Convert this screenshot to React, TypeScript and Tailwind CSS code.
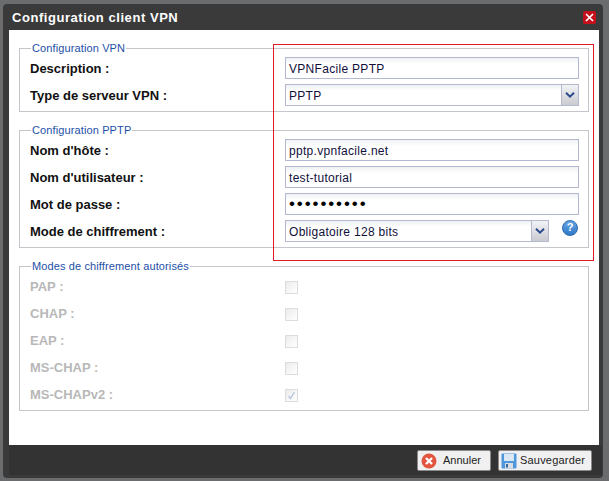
import React from "react";

const font = "font-['Liberation_Sans',sans-serif]";

function Label({ children, disabled }: { children: React.ReactNode; disabled?: boolean }) {
  return (
    <span className={`w-[255px] shrink-0 text-[13px] font-bold ${disabled ? "mb-[2px] text-[#b8b8b8]" : "mt-[1px] text-[#111]"}`}>
      {children}
    </span>
  );
}

function Input({ value, password }: { value: string; password?: boolean }) {
  return (
    <div className={`flex h-[22px] w-[294px] items-center border border-[#b4b9cf] bg-gradient-to-b from-[#eef0f3] to-white to-[30%] pl-[3px] ${password ? "text-[17px] tracking-[1.9px] text-black" : "pt-[1px] text-[12px] tracking-[0.3px] text-[#10103a]"}`}>
      {value}
    </div>
  );
}

function Select({ value, width }: { value: string; width: string }) {
  return (
    <div className={`flex h-[22px] items-center justify-between border border-[#b4b9cf] bg-gradient-to-b from-[#eef0f3] to-white to-[30%] pl-[3px] text-[12px] tracking-[0.3px] text-[#10103a] ${width}`}>
      <span className="pt-[1px]">{value}</span>
      <span className="flex h-[20px] w-[17px] items-center justify-center border-l border-[#b4b9cf] bg-gradient-to-b from-[#f2f3f5] to-[#c9cbd0]">
        <svg width="10" height="6" viewBox="0 0 10 6">
          <path d="M1 0.8 L5 4.6 L9 0.8" fill="none" stroke="#2b4a8b" strokeWidth="2" />
        </svg>
      </span>
    </div>
  );
}

function Group({ title, children, className }: { title: string; children: React.ReactNode; className: string }) {
  return (
    <fieldset className={`mx-[10px] border border-[#c4c6cc] pl-[10px] ${className}`}>
      <legend className="ml-[1px] px-[1px] text-[11px] leading-[12px] text-[#1d4fa8] tracking-[0.12px]">{title}</legend>
      {children}
    </fieldset>
  );
}

function Check({ checked }: { checked?: boolean }) {
  return (
    <span className="flex h-[13px] w-[13px] items-center justify-center border border-[#dcdcdc] bg-gradient-to-br from-[#ececec] to-white">
      {checked && (
        <svg width="9" height="9" viewBox="0 0 9 9">
          <path d="M1.5 5 L3.5 7.5 L7.5 1" fill="none" stroke="#b7c6dc" strokeWidth="1.4" />
        </svg>
      )}
    </span>
  );
}

const rowClass = "flex h-[22px] items-center";

export default function App() {
  return (
    <div className={`relative h-[481px] w-[609px] overflow-hidden bg-[#6a6c6d] ${font}`}>
      <div className="ml-[3px] mt-[4px] flex h-[474px] w-[600px] flex-col rounded-[4px] bg-[#3a3a3a] pl-[6px] pr-[1px]">
        <div className="flex h-[26px] shrink-0 items-center justify-between pr-[5px]">
          <span className="pl-[3px] pt-[1px] text-[13px] font-bold tracking-[0.55px] text-white">Configuration client VPN</span>
          <span className="mr-[1px] flex h-[13px] w-[13px] items-center justify-center rounded-[2px] bg-[#c3101a]">
            <svg width="9" height="9" viewBox="0 0 9 9">
              <path d="M1 1 L8 8 M8 1 L1 8" stroke="#fff" strokeWidth="1.7" />
            </svg>
          </span>
        </div>

        <div className="h-[415px] w-[590px] shrink-0 bg-white pt-[12px]">
          <Group title="Configuration VPN" className="h-[70px]">
            <div className="flex flex-col gap-[5px] pt-[3px]">
              <div className={rowClass}>
                <Label>Description :</Label>
                <Input value="VPNFacile PPTP" />
              </div>
              <div className={rowClass}>
                <Label>Type de serveur VPN :</Label>
                <Select value="PPTP" width="w-[294px]" />
              </div>
            </div>
          </Group>

          <Group title="Configuration PPTP" className="mt-[12px] h-[124px]">
            <div className="flex flex-col gap-[5px] pt-[3px]">
              <div className={rowClass}>
                <Label>Nom d'hôte :</Label>
                <Input value="pptp.vpnfacile.net" />
              </div>
              <div className={rowClass}>
                <Label>Nom d'utilisateur :</Label>
                <Input value="test-tutorial" />
              </div>
              <div className={rowClass}>
                <Label>Mot de passe :</Label>
                <Input value="••••••••••" password />
              </div>
              <div className={rowClass}>
                <Label>Mode de chiffrement :</Label>
                <Select value="Obligatoire 128 bits" width="w-[264px]" />
                <span className="mb-[7px] ml-[13px] flex h-[16px] w-[16px] items-center justify-center rounded-full border border-[#2a68b4] bg-gradient-to-b from-[#69a5e2] to-[#2f78c8] text-[11px] font-bold leading-none text-white">
                  ?
                </span>
              </div>
            </div>
          </Group>

          <Group title="Modes de chiffrement autorisés" className="mt-[12px] h-[151px]">
            <div className="flex flex-col gap-[6px] pt-[5px]">
              {["PAP :", "CHAP :", "EAP :", "MS-CHAP :", "MS-CHAPv2 :"].map((l, i) => (
                <div key={l} className="flex h-[21px] items-center">
                  <Label disabled>{l}</Label>
                  <Check checked={i === 4} />
                </div>
              ))}
            </div>
          </Group>
        </div>

        <div className="mb-[3px] flex flex-1 items-start justify-end gap-[7px] bg-[#333333] pr-[10px] pt-[5px]">
          <button className="flex h-[21px] w-[74px] items-center rounded-[2px] border border-[#8b8b8b] bg-[#f0f0f0] pl-[3px] text-[11px] text-[#222]">
            <svg width="16" height="16" viewBox="0 0 16 16" className="mr-[6px] shrink-0">
              <circle cx="8" cy="8" r="7.5" fill="#e2553f" />
              <path d="M5 5 L11 11 M11 5 L5 11" stroke="#fff" strokeWidth="2.4" />
            </svg>
            Annuler
          </button>
          <button className="flex h-[21px] w-[94px] items-center rounded-[2px] border border-[#8b8b8b] bg-[#f0f0f0] pl-[2px] text-[11px] tracking-[0.2px] text-[#222]">
            <svg width="16" height="16" viewBox="0 0 16 16" className="mr-[3px] shrink-0">
              <rect x="0.5" y="0.5" width="15" height="15" rx="1" fill="#4f97dc" />
              <rect x="3" y="1" width="10" height="7" fill="#dbe8f4" />
              <rect x="4" y="10" width="8" height="5.5" fill="#d9dde2" />
              <rect x="5" y="11" width="2" height="3.5" fill="#35689c" />
            </svg>
            Sauvegarder
          </button>
        </div>
      </div>

      <div className="pointer-events-none absolute left-[273px] top-[44px] h-[217px] w-[321px] border border-[#e01b24]" />
    </div>
  );
}
